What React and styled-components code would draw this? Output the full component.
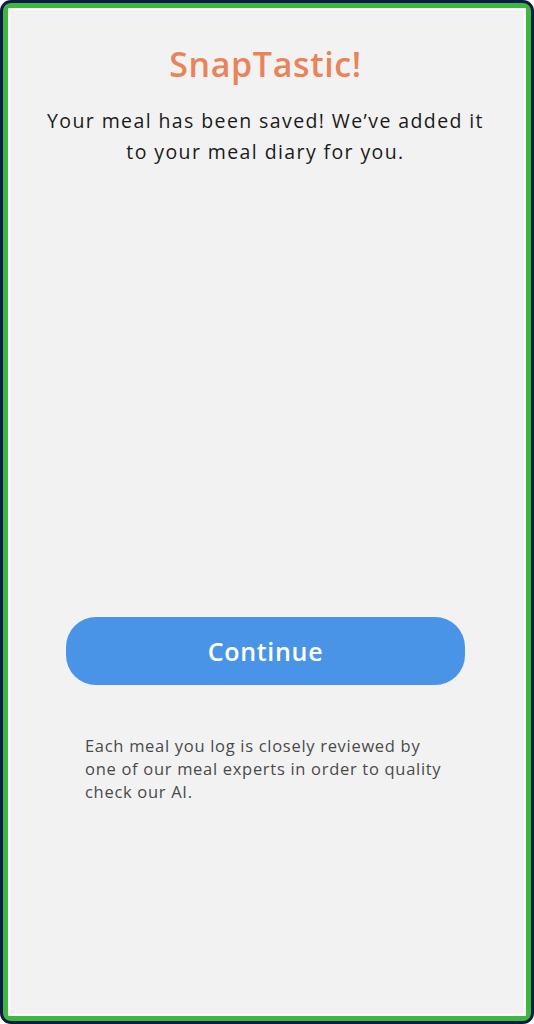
import React from "react";
import styled, { createGlobalStyle } from "styled-components";

const Global = createGlobalStyle`
  html, body { margin: 0; padding: 0; background: #ffffff; }
  body { font-family: "Open Sans", "Noto Sans", sans-serif; }
  * { box-sizing: border-box; }
`;

const Frame = styled.div`
  width: 534px;
  height: 1024px;
  border: 3px solid #0e1a48;
  border-radius: 11px;
  background: #3cb83a;
  padding: 5px;
  display: flex;
`;

const Screen = styled.div`
  flex: 1;
  border: 2px solid #ffffff;
  background: #f2f2f2;
  display: flex;
  flex-direction: column;
  align-items: center;
`;

const Title = styled.h1`
  margin: 34px 3px 0 0;
  font-size: 34px;
  line-height: 40px;
  font-weight: 600;
  letter-spacing: 0.6px;
  color: #e9835a;
`;

const Message = styled.p`
  margin: 21px 3px 0 0;
  font-size: 19.5px;
  line-height: 31px;
  font-weight: 400;
  letter-spacing: 1.4px;
  color: #1b1b1b;
  text-align: center;
`;

const ContinueButton = styled.button`
  margin: 450px 3px 0 0;
  width: 399px;
  height: 68px;
  border: none;
  border-radius: 30px;
  background: #4a94e8;
  color: #ffffff;
  font-family: inherit;
  font-size: 25px;
  font-weight: 600;
  letter-spacing: 0.7px;
  cursor: pointer;
`;

const Note = styled.p`
  align-self: flex-start;
  margin: 49px 0 0 75px;
  font-size: 16.5px;
  line-height: 23px;
  letter-spacing: 0.7px;
  color: #4a4a4a;
`;

export default function App() {
  return (
    <>
      <Global />
      <Frame>
        <Screen>
          <Title>SnapTastic!</Title>
          <Message>
            Your meal has been saved! We’ve added it
            <br />
            to your meal diary for you.
          </Message>
          <ContinueButton>Continue</ContinueButton>
          <Note>
            Each meal you log is closely reviewed by
            <br />
            one of our meal experts in order to quality
            <br />
            check our AI.
          </Note>
        </Screen>
      </Frame>
    </>
  );
}
